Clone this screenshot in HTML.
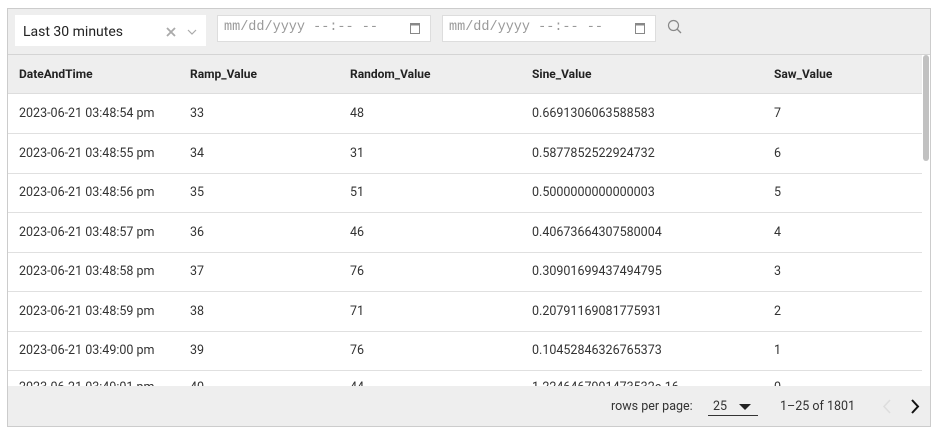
<!DOCTYPE html><html><head><style>
body{margin:0;width:938px;height:436px;background:#fff;font-family:Roboto,"Liberation Sans",Arial,sans-serif;position:relative;overflow:hidden}
.box{position:absolute;left:7px;top:8px;width:922px;height:417px;border:1px solid #ccc;background:#fff;overflow:hidden}
.tb{position:absolute;left:0;top:0;width:922px;height:45px;background:#eee;border-bottom:1px solid #d4d4d4}
.sel{position:absolute;left:7px;top:6px;width:191px;height:31px;background:#fff;font-size:14px;color:#222}
.sel span{position:absolute;left:8px;top:9px}
.date{position:absolute;top:6px;width:212px;height:25px;background:#fff;border:1px solid #ddd;font-family:"Liberation Mono",monospace;font-size:13.5px;color:#999}
.date span{position:absolute;left:6px;top:4px}
.hd{position:absolute;left:0;top:46px;width:914px;height:38px;background:#eee;border-bottom:1px solid #ddd;font-size:12px;font-weight:bold;color:#222}
.c{position:absolute;white-space:nowrap}
.row{position:absolute;left:0;width:914px;height:39px;border-bottom:1px solid #e0e0e0;font-size:12.5px;color:#333}
.row .c{top:12px}
.hd .c{top:12px}
.ft{position:absolute;left:0;top:377px;width:922px;height:40px;background:#eee;font-size:12.5px;color:#333}
.sb{position:absolute;left:915px;top:46px;width:6px;height:106px;background:#c1c1c1;border-radius:3px}
</style></head><body><div class="box">
<div class="tb">
<div class="sel"><span>Last 30 minutes</span>
<svg style="position:absolute;left:151px;top:12px" width="10" height="10"><path d="M1 1L9 9M9 1L1 9" stroke="#aaa" stroke-width="1.8"/></svg>
<svg style="position:absolute;left:172px;top:13px" width="10" height="8"><path d="M1 2L5 6L9 2" stroke="#aaa" fill="none" stroke-width="1.2"/></svg></div>
<div class="date" style="left:209px"><span>mm/dd/yyyy --:-- --</span><svg style="position:absolute;left:192px;top:6px" width="10" height="12"><rect x="0.5" y="1.5" width="9" height="10" fill="none" stroke="#888"/><rect x="0.5" y="1.5" width="9" height="2" fill="#888"/></svg></div>
<div class="date" style="left:434px"><span>mm/dd/yyyy --:-- --</span><svg style="position:absolute;left:192px;top:6px" width="10" height="12"><rect x="0.5" y="1.5" width="9" height="10" fill="none" stroke="#888"/><rect x="0.5" y="1.5" width="9" height="2" fill="#888"/></svg></div>
<svg style="position:absolute;left:659px;top:10px" width="16" height="16"><circle cx="6.5" cy="6.5" r="5" fill="none" stroke="#888" stroke-width="1.2"/><path d="M10 10L14 14" stroke="#888" stroke-width="1.3"/></svg>
</div>
<div class="hd"><div class="c" style="left:11px">DateAndTime</div><div class="c" style="left:182px">Ramp_Value</div><div class="c" style="left:342px">Random_Value</div><div class="c" style="left:524px">Sine_Value</div><div class="c" style="left:766px">Saw_Value</div></div>
<div class="row" style="top:85px"><div class="c" style="left:11px">2023-06-21 03:48:54 pm</div><div class="c" style="left:182px">33</div><div class="c" style="left:342px">48</div><div class="c" style="left:524px">0.6691306063588583</div><div class="c" style="left:766px">7</div></div>
<div class="row" style="top:124.5px"><div class="c" style="left:11px">2023-06-21 03:48:55 pm</div><div class="c" style="left:182px">34</div><div class="c" style="left:342px">31</div><div class="c" style="left:524px">0.5877852522924732</div><div class="c" style="left:766px">6</div></div>
<div class="row" style="top:164px"><div class="c" style="left:11px">2023-06-21 03:48:56 pm</div><div class="c" style="left:182px">35</div><div class="c" style="left:342px">51</div><div class="c" style="left:524px">0.5000000000000003</div><div class="c" style="left:766px">5</div></div>
<div class="row" style="top:203.5px"><div class="c" style="left:11px">2023-06-21 03:48:57 pm</div><div class="c" style="left:182px">36</div><div class="c" style="left:342px">46</div><div class="c" style="left:524px">0.40673664307580004</div><div class="c" style="left:766px">4</div></div>
<div class="row" style="top:243px"><div class="c" style="left:11px">2023-06-21 03:48:58 pm</div><div class="c" style="left:182px">37</div><div class="c" style="left:342px">76</div><div class="c" style="left:524px">0.30901699437494795</div><div class="c" style="left:766px">3</div></div>
<div class="row" style="top:282.5px"><div class="c" style="left:11px">2023-06-21 03:48:59 pm</div><div class="c" style="left:182px">38</div><div class="c" style="left:342px">71</div><div class="c" style="left:524px">0.20791169081775931</div><div class="c" style="left:766px">2</div></div>
<div class="row" style="top:322px"><div class="c" style="left:11px">2023-06-21 03:49:00 pm</div><div class="c" style="left:182px">39</div><div class="c" style="left:342px">76</div><div class="c" style="left:524px">0.10452846326765373</div><div class="c" style="left:766px">1</div></div>
<div class="row" style="top:361.5px"><div class="c" style="left:11px;top:9px">2023-06-21 03:49:01 pm</div><div class="c" style="left:182px;top:9px">40</div><div class="c" style="left:342px;top:9px">44</div><div class="c" style="left:524px;top:9px">1.2246467991473532e-16</div><div class="c" style="left:766px;top:9px">0</div></div>
<div class="sb"></div>
<div class="ft">
<div class="c" style="left:603px;top:13px">rows per page:</div>
<div class="c" style="left:700px;top:12px;width:50px;height:17px;border-bottom:1px solid #333"><span style="position:absolute;left:5px;top:1px">25</span><svg style="position:absolute;left:31px;top:6px" width="12" height="7"><path d="M0 0H12L6 6Z" fill="#222"/></svg></div>
<div class="c" style="left:772px;top:13px">1–25 of 1801</div>
<svg style="position:absolute;left:874px;top:13px" width="10" height="15"><path d="M8 1L2 7.5L8 14" stroke="#ddd" fill="none" stroke-width="1.5"/></svg>
<svg style="position:absolute;left:902px;top:13px" width="10" height="15"><path d="M2 1L8 7.5L2 14" stroke="#111" fill="none" stroke-width="2"/></svg>
</div>
</div></body></html>
